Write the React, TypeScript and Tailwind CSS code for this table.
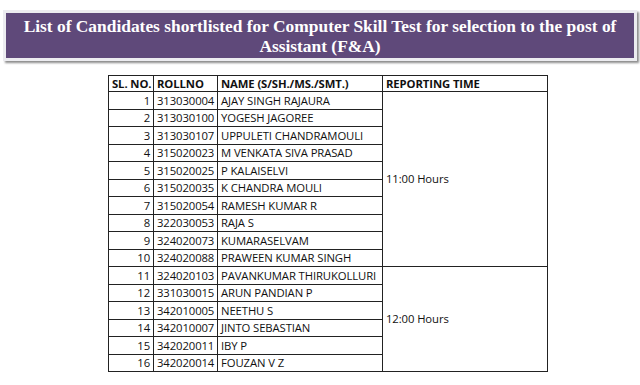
const rows: [number, string, string][] = [
  [1, '313030004', 'AJAY SINGH RAJAURA'],
  [2, '313030100', 'YOGESH JAGOREE'],
  [3, '313030107', 'UPPULETI CHANDRAMOULI'],
  [4, '315020023', 'M VENKATA SIVA PRASAD'],
  [5, '315020025', 'P KALAISELVI'],
  [6, '315020035', 'K CHANDRA MOULI'],
  [7, '315020054', 'RAMESH KUMAR R'],
  [8, '322030053', 'RAJA S'],
  [9, '324020073', 'KUMARASELVAM'],
  [10, '324020088', 'PRAWEEN KUMAR SINGH'],
  [11, '324020103', 'PAVANKUMAR THIRUKOLLURI'],
  [12, '331030015', 'ARUN PANDIAN P'],
  [13, '342010005', 'NEETHU S'],
  [14, '342010007', 'JINTO SEBASTIAN'],
  [15, '342020011', 'IBY P'],
  [16, '342020014', 'FOUZAN V Z'],
];

export default function App() {
  return (
    <main className="w-[640px] h-[385px] bg-white overflow-hidden pt-[10px]">
      {/* Title banner */}
      <div className="mx-[3px] border-[3px] border-[#ececf0] shadow-[2px_2px_2px_rgba(0,0,0,0.45)]">
        <div className="bg-[#5f497a] h-[45px] flex flex-col items-center justify-center text-white font-bold text-[17.4px] leading-[20px] font-['Liberation_Serif',serif] whitespace-nowrap">
          <p>List of Candidates shortlisted for Computer Skill Test for selection to the post of</p>
          <p>Assistant (F&amp;A)</p>
        </div>
      </div>

      {/* Candidates table */}
      <table className="ml-[108px] mt-[14px] w-[439px] table-fixed border-collapse text-[11.3px] text-[#111] font-['Open_Sans',sans-serif] tracking-[-0.1px] whitespace-nowrap">
        <colgroup>
          <col className="w-[45px]" />
          <col className="w-[64px]" />
          <col className="w-[165px]" />
          <col className="w-[165px]" />
        </colgroup>
        <thead>
          <tr className="h-[16px] font-bold">
            <th className="border border-[#222] px-[3px] text-left leading-none">SL. NO.</th>
            <th className="border border-[#222] px-[3px] text-left leading-none">ROLLNO</th>
            <th className="border border-[#222] px-[3px] text-left leading-none">NAME (S/SH./MS./SMT.)</th>
            <th className="border border-[#222] px-[3px] text-left leading-none">REPORTING TIME</th>
          </tr>
        </thead>
        <tbody>
          {rows.map(([n, roll, name], i) => (
            <tr key={n} className="h-[17.5px]">
              <td className="border border-[#222] px-[3px] text-right leading-none">{n}</td>
              <td className="border border-[#222] px-[3px] leading-none">{roll}</td>
              <td className="border border-[#222] px-[3px] leading-none overflow-hidden">{name}</td>
              {i === 0 && (
                <td rowSpan={10} className="border border-[#222] px-[3px] align-middle leading-none">11:00 Hours</td>
              )}
              {i === 10 && (
                <td rowSpan={6} className="border border-[#222] px-[3px] align-middle leading-none">12:00 Hours</td>
              )}
            </tr>
          ))}
        </tbody>
      </table>
    </main>
  );
}
